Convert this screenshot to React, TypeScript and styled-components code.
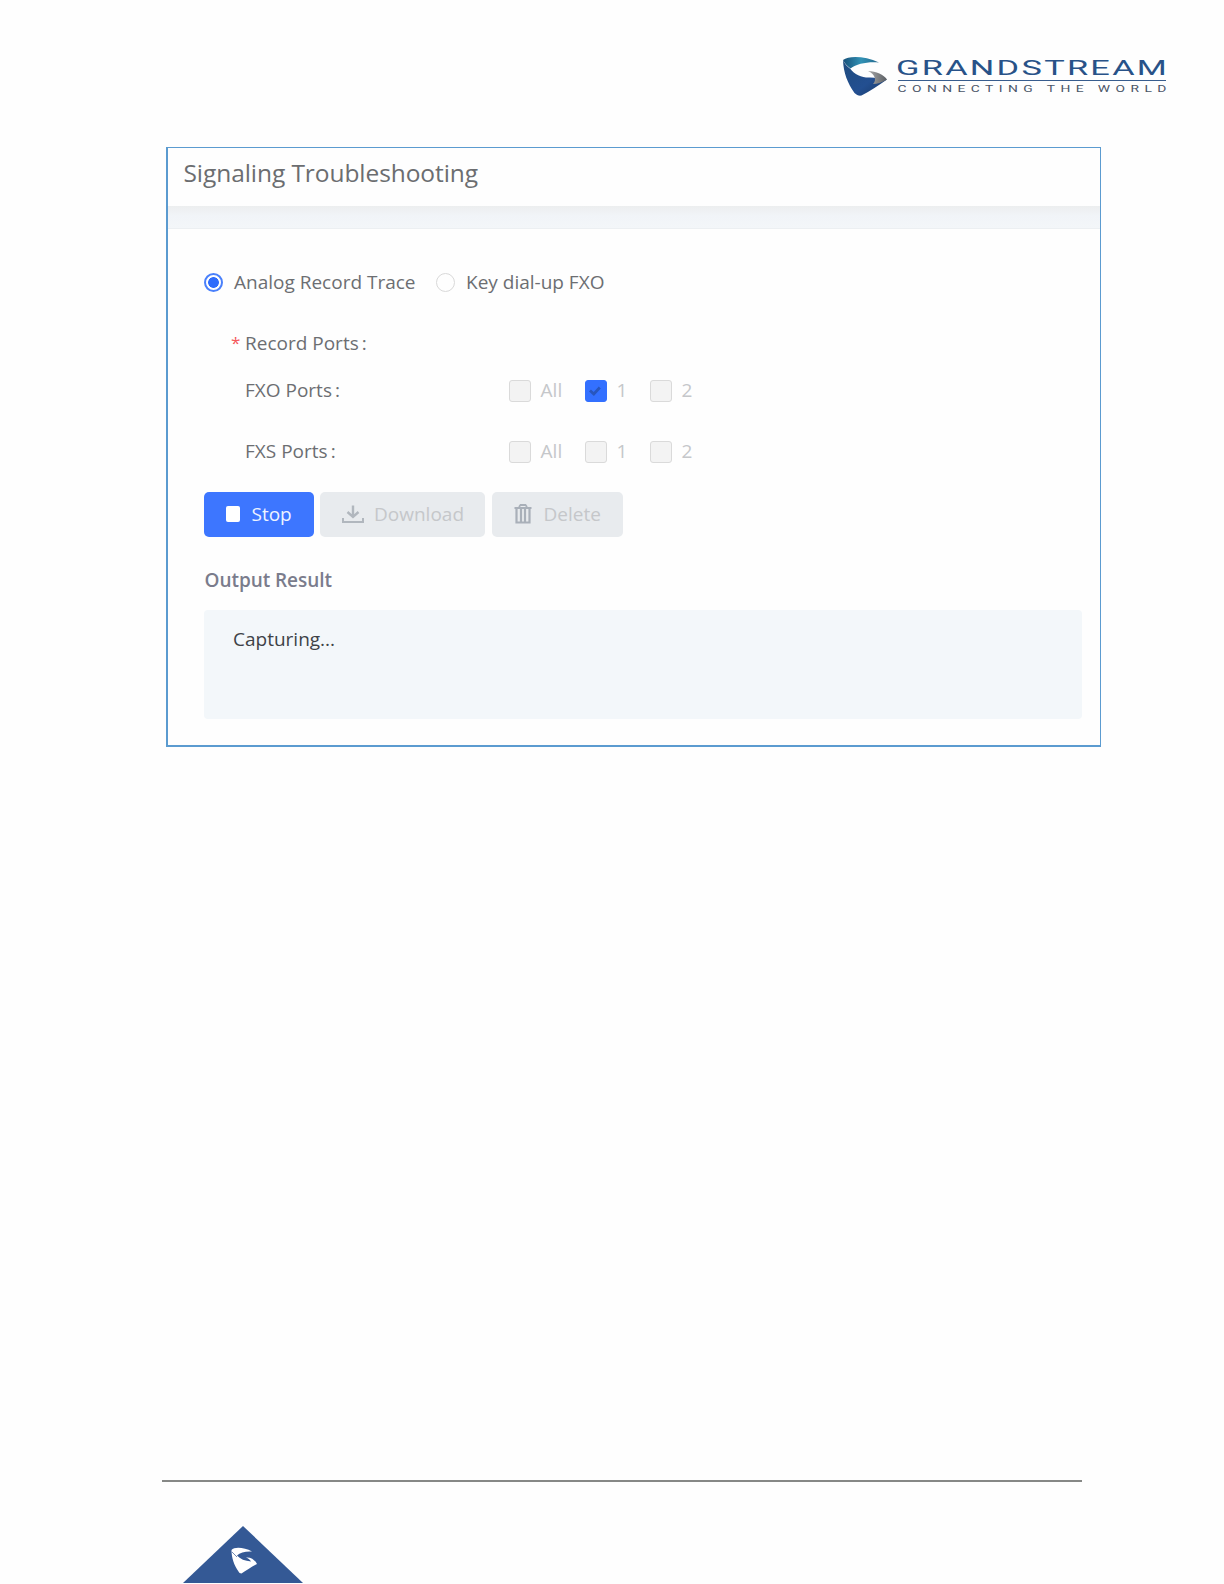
import React from "react";
import styled, { createGlobalStyle } from "styled-components";

const GlobalStyle = createGlobalStyle`
  * { box-sizing: border-box; }
  body { margin: 0; background: #fefefe; }
`;

const Page = styled.div`
  width: 1224px;
  height: 1584px;
  overflow: hidden;
  display: flex;
  flex-direction: column;
  background: #fefefe;
  font-family: "Open Sans", "Noto Sans", sans-serif;
`;

const Header = styled.header`
  height: 147px;
  flex: none;
  display: flex;
  justify-content: flex-end;
  padding: 52px 54px 0 0;
`;

const Panel = styled.section`
  width: 935px;
  height: 600px;
  flex: none;
  margin-left: 166px;
  border: solid #5b9bd0;
  border-width: 1px 1px 2px 2px;
  background: #fefefe;
`;

const PanelTitle = styled.h1`
  margin: 0;
  height: 58px;
  padding-left: 15.5px;
  font-size: 24.5px;
  line-height: 50px;
  font-weight: 400;
  letter-spacing: -0.07px;
  color: #6b6d70;
`;

const Band = styled.div`
  height: 23px;
  background: linear-gradient(#eceeef, #f1f4f8 45%, #f3f6f9);
  border-bottom: 1px solid #eceff2;
`;

const Body = styled.div`
  display: flex;
  flex-direction: column;
  padding: 42px 18px 0 36px;
`;

const Text = styled.span<{ $tone?: string }>`
  font-size: 19px;
  line-height: 22px;
  white-space: nowrap;
  color: ${(p) => p.$tone ?? "#6c6e72"};
`;

const RadioRow = styled.div`
  display: flex;
  align-items: center;
  height: 22px;
`;

const RadioOption = styled.label<{ $width: number }>`
  display: flex;
  align-items: center;
  gap: 11px;
  width: ${(p) => p.$width}px;
`;

const RadioDot = styled.span<{ $on?: boolean }>`
  flex: none;
  width: 19px;
  height: 19px;
  border-radius: 50%;
  border: ${(p) => (p.$on ? "2px solid #4a80fb" : "1px solid #d9d9d9")};
  background: ${(p) =>
    p.$on ? "radial-gradient(circle, #2f6cfb 5px, #fefefe 5.7px)" : "#fefefe"};
`;

const FieldRow = styled.div<{ $gap: number }>`
  display: grid;
  grid-template-columns: 11px 260.6px auto;
  grid-template-rows: 22px;
  column-gap: 3px;
  align-items: center;
  height: 22px;
  padding-left: 27px;
  margin-top: ${(p) => p.$gap}px;
`;

const FieldLabel = styled(Text)`
  padding-bottom: 2px;
`;

const Required = styled(Text)`
  font-size: 17px;
  padding-bottom: 3px;
`;

const Checks = styled.div`
  display: flex;
`;

const CheckOption = styled.label<{ $width: number }>`
  display: flex;
  flex: none;
  align-items: center;
  gap: 10px;
  width: ${(p) => p.$width}px;
`;

const CheckBox = styled.span<{ $on?: boolean }>`
  flex: none;
  width: 22px;
  height: 22px;
  display: grid;
  place-items: center;
  border-radius: 3px;
  border: 1.5px solid ${(p) => (p.$on ? "#3370ff" : "#dadada")};
  background: ${(p) => (p.$on ? "#3370ff" : "#f3f3f3")};
`;

const Actions = styled.div`
  display: flex;
  margin-top: 29px;
`;

const Button = styled.button<{ $primary?: boolean; $width: number; $gap: number }>`
  display: flex;
  align-items: center;
  gap: ${(p) => p.$gap}px;
  width: ${(p) => p.$width}px;
  height: 45px;
  margin: 0 6.5px 0 0;
  padding: 0 0 1px 22px;
  border: 0;
  border-radius: 5px;
  font-family: inherit;
  background: ${(p) => (p.$primary ? "#3d76ff" : "#e8ebee")};
`;

const StopIcon = styled.span`
  width: 14px;
  height: 16px;
  border-radius: 2px;
  background: #fff;
`;

const OutputTitle = styled.h2`
  margin: 32px 0 0;
  padding-left: 0.5px;
  font-size: 19px;
  line-height: 22px;
  font-weight: 600;
  letter-spacing: -0.05px;
  color: #7a7c8c;
`;

const OutputBox = styled.div`
  height: 109px;
  margin-top: 19px;
  padding: 18px 29px;
  border-radius: 4px;
  background: #f3f7fa;
  line-height: 22px;
`;

const Footer = styled.footer`
  margin: auto 0 1px 161.5px;
  width: 920px;
  height: 103px;
  border-top: 2px solid #868886;
  padding: 44px 0 0 21px;
`;

function BrandLogo() {
  return (
    <svg width="330" height="50" viewBox="840 52 330 50" style={{ display: "block" }}>
      <defs>
        <linearGradient id="swoosh" x1="0" x2="1">
          <stop offset="0" stopColor="#174f78" />
          <stop offset="0.5" stopColor="#3292b5" />
          <stop offset="1" stopColor="#23678c" />
        </linearGradient>
        <linearGradient id="shield" x1="0" y1="0" x2="1" y2="1">
          <stop offset="0" stopColor="#204c7e" />
          <stop offset="0.6" stopColor="#234f91" />
          <stop offset="1" stopColor="#183864" />
        </linearGradient>
        <linearGradient id="tip" x1="0" x2="1">
          <stop offset="0" stopColor="#aaa" />
          <stop offset="1" stopColor="#595d62" />
        </linearGradient>
      </defs>
      <path d="M843 60C849 55.5 865 56 879 62.5C868 61.5 857 63.5 850.5 68.5C847 66 844.5 63 843 60Z" fill="url(#swoosh)" />
      <path d="M843 60C844.5 63.5 847 66.5 850.5 69C854 74.500 863 78 870 77.500C876 77.500 881 79 887 79.500C879 85 870 91 861.500 95.500C859 96 856.500 95 854.500 93C847.500 83 843.500 73 843 60Z" fill="url(#shield)" />
      <path d="M868 71C876 71 884 75 887 79.500C882 82.500 877 84 873 84C877 80 875 74 868 71Z" fill="url(#tip)" />
      <g fontFamily="Roboto, sans-serif">
        <text transform="translate(896 75) scale(1.72 1)" fontSize="20" fill="#285288" textLength="157.500" lengthAdjust="spacing">GRANDSTREAM</text>
        <text transform="translate(897.5 92) scale(1.65 1)" fontSize="8.400" fill="#4b5668" textLength="163" lengthAdjust="spacing">CONNECTING THE WORLD</text>
      </g>
      <path d="M898 80.500H1166" stroke="#385d8e" strokeWidth="1.100" />
    </svg>
  );
}

function DownloadIcon() {
  return (
    <svg width="22" height="19" viewBox="0 0 22 19" fill="none" stroke="#b1b7be" strokeWidth="2">
      <path d="M11 0.500V12M5.500 7L11 12L16.500 7" strokeWidth="2.400" />
      <path d="M1 13V17H21V13" />
    </svg>
  );
}

function TrashIcon() {
  return (
    <svg width="18" height="20" viewBox="0 0 18 20" fill="none" stroke="#a9b0b9">
      <path d="M0.500 4H17.500M5 3L6.500 1H11.500L13 3" strokeWidth="1.800" />
      <path d="M2.500 4V18.500H15.500V4M7 5V18M11 5V18" strokeWidth="2.200" />
    </svg>
  );
}

function CheckIcon() {
  return (
    <svg width="14" height="12" viewBox="0 0 14 12" fill="none" stroke="#2856bd" strokeWidth="2.800">
      <path d="M1 5.500L4.800 9L10.800 2.500" />
    </svg>
  );
}

function FooterBadge() {
  return (
    <svg width="120" height="57" viewBox="0 0 120 57" style={{ display: "block" }}>
      <path d="M60 0L120 57H0Z" fill="#345995" />
      <path d="M48.500 24C51.500 20.500 61.500 21.500 69 25.500C63 25 57 26.500 54 29.500C57 33 62 35 68 35.500C67 33.500 65.500 32.500 63 31.500C68 31 72 34 74 38C69 40.500 63 44.500 58.500 47.500C57 47.500 56 46.500 55.500 45.500C51 39 48.500 32 48.500 24Z" fill="#fff" />
      <path d="M49 26L54 31" stroke="#345995" strokeWidth="0.700" />
    </svg>
  );
}

const muted = "#c5c7ca";

function PortChecks({ selected }: { selected?: string }) {
  return (
    <Checks>
      {["All", "1", "2"].map((name) => (
        <CheckOption key={name} $width={name === "All" ? 76 : 65}>
          <CheckBox $on={selected === name}>{selected === name && <CheckIcon />}</CheckBox>
          <FieldLabel $tone={muted}>{name}</FieldLabel>
        </CheckOption>
      ))}
    </Checks>
  );
}

export default function App() {
  return (
    <Page>
      <GlobalStyle />
      <Header>
        <BrandLogo />
      </Header>
      <Panel>
        <PanelTitle>Signaling Troubleshooting</PanelTitle>
        <Band />
        <Body>
          <RadioRow>
            <RadioOption $width={232}>
              <RadioDot $on />
              <Text>Analog Record Trace</Text>
            </RadioOption>
            <RadioOption $width={180}>
              <RadioDot />
              <Text>Key dial-up FXO</Text>
            </RadioOption>
          </RadioRow>
          <FieldRow $gap={40}>
            <Required $tone="#f5585b">*</Required>
            <FieldLabel>Record Ports&#8201;:</FieldLabel>
          </FieldRow>
          <FieldRow $gap={25}>
            <span />
            <FieldLabel>FXO Ports&#8201;:</FieldLabel>
            <PortChecks selected="1" />
          </FieldRow>
          <FieldRow $gap={39}>
            <span />
            <FieldLabel>FXS Ports&#8201;:</FieldLabel>
            <PortChecks />
          </FieldRow>
          <Actions>
            <Button $primary $width={109.5} $gap={11.5}>
              <StopIcon />
              <Text $tone="#eef3ff">Stop</Text>
            </Button>
            <Button $width={165} $gap={10}>
              <DownloadIcon />
              <Text $tone={muted}>Download</Text>
            </Button>
            <Button $width={131} $gap={12}>
              <TrashIcon />
              <Text $tone={muted}>Delete</Text>
            </Button>
          </Actions>
          <OutputTitle>Output Result</OutputTitle>
          <OutputBox>
            <Text $tone="#3e4247">Capturing...</Text>
          </OutputBox>
        </Body>
      </Panel>
      <Footer>
        <FooterBadge />
      </Footer>
    </Page>
  );
}
